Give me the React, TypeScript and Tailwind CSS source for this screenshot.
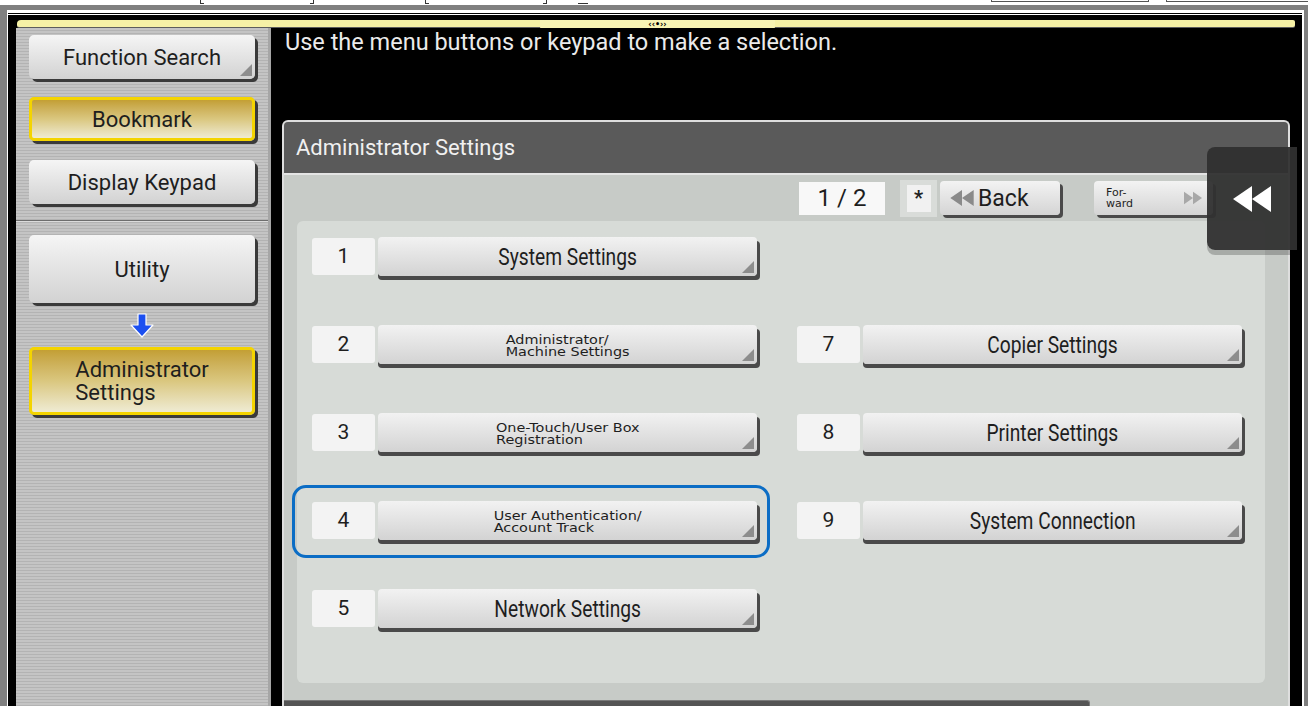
import React from 'react';

type Cell = { n: string; label?: string; lines?: string[]; highlight?: boolean } | null;

const cells: Cell[] = [
  { n: '1', label: 'System Settings' },
  null,
  { n: '2', lines: ['Administrator/', 'Machine Settings'] },
  { n: '7', label: 'Copier Settings' },
  { n: '3', lines: ['One-Touch/User Box', 'Registration'] },
  { n: '8', label: 'Printer Settings' },
  { n: '4', lines: ['User Authentication/', 'Account Track'], highlight: true },
  { n: '9', label: 'System Connection' },
  { n: '5', label: 'Network Settings' },
  null,
];

const Corner = () => (
  <svg className="absolute right-[3px] bottom-[3px]" width="12" height="12" viewBox="0 0 12 12">
    <polygon points="12,0 12,12 0,12" fill="#8d8d8d" />
  </svg>
);

const SideButton: React.FC<{ yellow?: boolean; corner?: boolean; className?: string; children: React.ReactNode }> = ({
  yellow,
  corner,
  className = '',
  children,
}) => (
  <div
    className={`relative w-[226px] rounded-[5px] shadow-[3px_3px_0_#3a3a3a] flex items-center justify-center text-[22px] text-[#1e1e1e] ${
      yellow
        ? 'border-[3px] border-[#f4d400] bg-linear-to-b from-[#c39f34] via-[#dac77f] to-[#efebd3]'
        : 'bg-linear-to-b from-[#f5f5f5] to-[#d2d2d2]'
    } ${className}`}
  >
    {children}
    {corner && <Corner />}
  </div>
);

const DownArrow = () => (
  <svg width="26" height="25" viewBox="0 0 26 25">
    <path d="M9 1 H17 V12 H24 L13 24 L2 12 H9 Z" fill="#1c4ff0" stroke="#ffffff" strokeWidth="1.2" strokeLinejoin="round" />
  </svg>
);

const LeftDouble: React.FC<{ w: number; h: number; color: string }> = ({ w, h, color }) => (
  <svg width={w} height={h} viewBox="0 0 38 26">
    <polygon points="19,0 0,13 19,26" fill={color} />
    <polygon points="38,0 19,13 38,26" fill={color} />
  </svg>
);

const RightDouble: React.FC<{ color: string }> = ({ color }) => (
  <svg width="18" height="14" viewBox="0 0 38 26">
    <polygon points="0,0 19,13 0,26" fill={color} />
    <polygon points="19,0 38,13 19,26" fill={color} />
  </svg>
);

const Item: React.FC<{ cell: NonNullable<Cell> }> = ({ cell }) => (
  <div className="relative w-[445px] flex items-start gap-[3px] h-[43px]">
    {cell.highlight && (
      <div className="absolute -left-[20px] -top-[16px] -right-[13px] -bottom-[14px] rounded-[14px] border-[3px] border-[#0b6dc5]" />
    )}
    <div className="mt-px w-[63px] h-[37px] rounded-[3px] bg-[#f3f3f3] flex items-center justify-center text-[21px] text-[#1e1e1e]">
      {cell.n}
    </div>
    <div className="relative w-[379px] h-[39px] rounded-[4px] bg-linear-to-b from-[#f2f2f2] to-[#d3d3d3] shadow-[3px_4px_0_#4a4a4a,0_4px_0_#4a4a4a] flex items-center justify-center">
      {cell.label ? (
        <span className="inline-block text-[24px] leading-none text-[#1e1e1e] scale-x-[0.8]">{cell.label}</span>
      ) : (
        <div className="font-['DejaVu_Sans',sans-serif] text-[12px] leading-[12px] text-[#1e1e1e] text-left scale-x-[1.2] mt-[2px]">
          {cell.lines!.map((l) => (
            <div key={l}>{l}</div>
          ))}
        </div>
      )}
      <Corner />
    </div>
  </div>
);

const App: React.FC = () => {
  return (
    <div className="w-[1308px] h-[706px] bg-[#808080] overflow-hidden flex flex-col font-['Roboto',sans-serif]">
      {/* cut-off strip at top */}
      <div className="relative h-[5px] shrink-0 bg-white">
        <span className="absolute left-[200px] top-0 w-[4px] h-[4px] border-l border-b border-[#333]" />
        <span className="absolute left-[310px] top-0 w-[4px] h-[4px] border-r border-b border-[#333]" />
        <span className="absolute left-[425px] top-0 w-[4px] h-[4px] border-l border-b border-[#333]" />
        <span className="absolute left-[543px] top-0 w-[4px] h-[4px] border-r border-b border-[#333]" />
        <span className="absolute left-[578px] top-[3px] w-[10px] h-px bg-[#333]" />
        <span className="absolute left-[991px] top-0 w-[158px] h-[2px] border-x border-b border-[#555]" />
        <span className="absolute left-[1166px] top-0 w-[142px] h-[2px] border-l border-b border-[#555]" />
      </div>
      <div className="h-[5px] shrink-0" />

      {/* screen frame */}
      <div className="flex-1 min-h-0 ml-[7px] mr-[4px] bg-white pt-[3px] pl-px pr-[2px]">
        <div className="h-full bg-black pt-px flex flex-col">
          <div className="h-px bg-white shrink-0" />
          <div className="flex-1 min-h-0 flex flex-col pl-[8px] pr-[2px] pt-[5px]">
            {/* yellow bar */}
            <div className="flex items-start ml-px mr-[5px] h-[8px] shrink-0">
              <div className="w-[523px] h-[7px] bg-[#f6f1a6] rounded-tl-[4px] rounded-bl-[2px] shadow-[0_1px_0_#5c5c5c]" />
              <div className="w-[235px] h-[9px] bg-[#f8f4b4] rounded-b-[2px] shadow-[0_1px_0_#5c5c5c] flex items-center justify-center">
                <span className="font-['DejaVu_Sans',sans-serif] text-[8px] font-bold leading-none text-black">‹‹•››</span>
              </div>
              <div className="flex-1 h-[7px] bg-[#f6f1a6] rounded-r-[2px] shadow-[0_1px_0_#5c5c5c]" />
            </div>

            {/* main row */}
            <div className="flex-1 min-h-0 flex">
              {/* left panel */}
              <div className="w-[255px] shrink-0 flex flex-col border-r-[3px] border-[#a6a6a6] bg-[repeating-linear-gradient(to_bottom,#c4c4c4_0px,#c4c4c4_2px,#b3b3b3_2px,#b3b3b3_3px)]">
                <div className="h-[192px] pl-[13px] pt-[7px] flex flex-col">
                  <SideButton className="h-[44px]" corner>
                    Function Search
                  </SideButton>
                  <SideButton className="h-[44px] mt-[18px]" yellow>
                    Bookmark
                  </SideButton>
                  <SideButton className="h-[44px] mt-[19px]">Display Keypad</SideButton>
                </div>
                <div className="h-px bg-[#6e6e6e]" />
                <div className="h-px bg-[#dcdcdc]" />
                <div className="pl-[13px] pt-[13px] flex flex-col">
                  <SideButton className="h-[68px]">Utility</SideButton>
                  <div className="w-[226px] h-[24px] mt-[10px] flex justify-center">
                    <DownArrow />
                  </div>
                  <SideButton className="h-[68px] mt-[10px]" yellow>
                    <div className="text-left leading-[23px]">
                      Administrator
                      <br />
                      Settings
                    </div>
                  </SideButton>
                </div>
              </div>

              {/* right black area */}
              <div className="relative flex-1 min-w-0 flex flex-col bg-black">
                <div className="h-[92px] shrink-0 pl-[14px] text-[23.5px] leading-[28px] text-[#ebebeb]">
                  Use the menu buttons or keypad to make a selection.
                </div>

                <div className="ml-[11px] w-[1008px] flex-1 min-h-0 flex flex-col border-2 border-b-0 border-[#dedede] rounded-t-[6px] bg-[#c7cbc7] overflow-hidden">
                  <div className="h-[51px] shrink-0 bg-[#5a5a5a] pl-[12px] flex items-center text-[22px] text-[#f0f0f0]">
                    Administrator Settings
                  </div>
                  <div className="h-[2px] shrink-0 bg-[#e4e4e4]" />

                  {/* page nav */}
                  <div className="h-[46px] shrink-0 pl-[515px] flex items-center">
                    <div className="w-[86px] h-[33px] bg-[#f8f8f8] flex items-center justify-center text-[24px] text-[#1e1e1e]">
                      1 / 2
                    </div>
                    <div className="ml-[15px] w-[37px] h-[37px] bg-[#d9dcd9] flex items-center justify-center">
                      <div className="w-[24px] h-[27px] bg-[#f1f1f1] flex items-center justify-center text-[20px] font-bold text-[#222]">
                        *
                      </div>
                    </div>
                    <div className="ml-[3px] w-[120px] h-[34px] rounded-[4px] bg-linear-to-b from-[#f3f3f3] to-[#d4d4d4] shadow-[3px_3px_0_#4a4a4a] flex items-center pl-[10px] gap-[4px]">
                      <LeftDouble w={24} h={16} color="#8a8a8a" />
                      <span className="text-[23px] leading-none text-[#1e1e1e]">Back</span>
                    </div>
                    <div className="ml-[34px] w-[119px] h-[34px] rounded-[4px] bg-linear-to-b from-[#f3f3f3] to-[#d4d4d4] shadow-[3px_3px_0_#4a4a4a] flex items-center justify-between pl-[12px] pr-[11px]">
                      <div className="font-['DejaVu_Sans',sans-serif] text-[11px] leading-[11px] text-[#1e1e1e]">
                        For-
                        <br />
                        ward
                      </div>
                      <RightDouble color="#a8a8a8" />
                    </div>
                  </div>

                  {/* menu grid */}
                  <div className="ml-[13px] w-[968px] h-[462px] shrink-0 rounded-[6px] bg-[#d7dbd7] pt-[16px] pl-[15px]">
                    <div className="grid grid-cols-[485px_445px] auto-rows-[43px] gap-y-[45px]">
                      {cells.map((c, i) => (c ? <Item key={i} cell={c} /> : <div key={i} />))}
                    </div>
                  </div>

                  <div className="mt-[17px] w-[806px] h-[6px] shrink-0 bg-[#555555] rounded-tr-[3px] border-t border-r border-[#7a7a7a]" />
                </div>

                {/* side drawer tab */}
                <div className="absolute right-[3px] top-[119px] w-[90px] h-[103px] rounded-l-[8px] bg-[#303030]/95 shadow-[0_5px_0_rgba(0,0,0,0.22)] flex items-center justify-center">
                  <LeftDouble w={38} h={26} color="#ffffff" />
                </div>
              </div>
            </div>
          </div>
        </div>
      </div>
    </div>
  );
};

export default App;
